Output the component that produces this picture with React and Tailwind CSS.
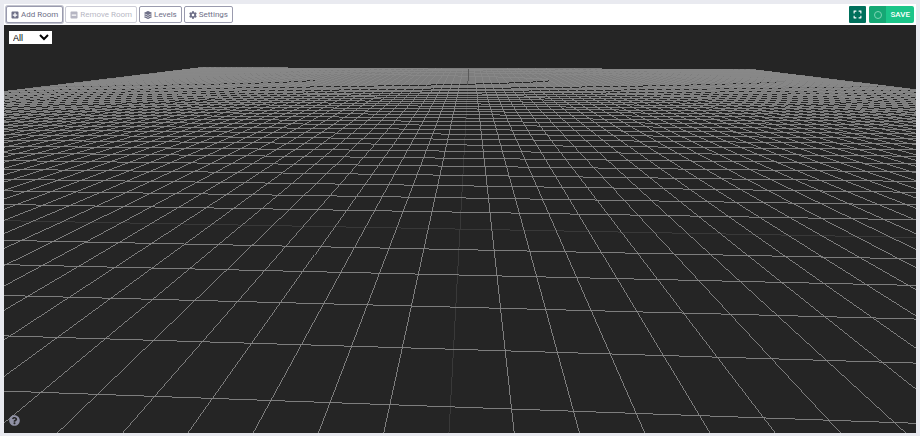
import React, { useState } from "react";
import {
  FaCog,
  FaExpand,
  FaLayerGroup,
  FaMinusSquare,
  FaPlusSquare,
  FaQuestionCircle,
} from "react-icons/fa";

const HALF = 50; // cells on each side of the origin
const WIDTH = 912;
const HEIGHT = 408;

// Ground plane -> view. The camera looks at the origin with a slight yaw.
const YAW = 0.0316;
const DEPTH = 0.0956;
const CELL = 31.8;
const HORIZON = 10;
const CAMERA_DROP = 194.1;
const NEAR = 0.35;

const depthAt = (i, j) => 1 + DEPTH * (j - YAW * i);

function project(i, j) {
  const w = depthAt(i, j);
  const x = WIDTH / 2 + (CELL * (i + YAW * j)) / w;
  const y = HORIZON + CAMERA_DROP / w;
  return `${x.toFixed(2)} ${y.toFixed(2)}`;
}

// Returns a path for the part of a segment in front of the near plane
function segment(a, b) {
  const wa = depthAt(a[0], a[1]);
  const wb = depthAt(b[0], b[1]);
  if (wa < NEAR && wb < NEAR) return "";
  let from = a;
  let to = b;
  if (wa < NEAR || wb < NEAR) {
    const t = (NEAR - wa) / (wb - wa);
    const cut = [a[0] + (b[0] - a[0]) * t, a[1] + (b[1] - a[1]) * t];
    if (wa < NEAR) from = cut;
    else to = cut;
  }
  return `M${project(from[0], from[1])}L${project(to[0], to[1])}`;
}

const gridLines = [];
for (let n = HALF; n >= -HALF; n--) {
  if (n === 0) continue;
  gridLines.push(segment([-HALF, n], [HALF, n]));
  gridLines.push(segment([n, -HALF], [n, HALF]));
}
const axisLines = [
  segment([-HALF, 0], [HALF, 0]),
  segment([0, -HALF], [0, HALF]),
];

function FloorGrid() {
  return (
    <svg
      className="block w-full h-auto"
      viewBox={`0 0 ${WIDTH} ${HEIGHT}`}
      fill="none"
      strokeWidth="0.9"
      shapeRendering="crispEdges"
      aria-hidden="true"
    >
      {axisLines.map((d, i) => (
        <path key={i} d={d} stroke="#3c3c3c" />
      ))}
      {gridLines.map((d, i) => (
        <path key={i} d={d} stroke="#888888" />
      ))}
      <path d={segment([0, 30], [0, HALF])} stroke="#555555" />
    </svg>
  );
}

function ToolButton({ icon: Icon, label, active, disabled }) {
  return (
    <button
      type="button"
      disabled={disabled}
      className={`flex h-[17px] items-center gap-[2px] rounded-[2px] border border-[#9a9bae] bg-white px-1 text-[8px] leading-none text-[#6f7088] disabled:opacity-50 ${
        active ? "ring-1 ring-[#c3c4cf]" : ""
      }`}
    >
      <Icon className="h-2 w-auto" />
      {label}
    </button>
  );
}

function App() {
  const [level, setLevel] = useState("All");

  return (
    <div className="min-h-screen bg-[#e9eaf0] p-1 pb-[3px] font-['Roboto',sans-serif] antialiased">
      <div className="flex h-[21px] items-center justify-between bg-white px-[2px]">
        <div className="flex gap-[2px]">
          <ToolButton icon={FaPlusSquare} label="Add Room" active />
          <ToolButton icon={FaMinusSquare} label="Remove Room" disabled />
          <ToolButton icon={FaLayerGroup} label="Levels" />
          <ToolButton icon={FaCog} label="Settings" />
        </div>
        <div className="flex gap-[3px]">
          <button
            type="button"
            aria-label="Fullscreen"
            className="flex size-[17px] items-center justify-center rounded-[1px] bg-[#00705c] text-white"
          >
            <FaExpand className="size-[9px]" />
          </button>
          <button
            type="button"
            className="flex h-[17px] items-stretch overflow-hidden rounded-[2px] bg-[#1bc589] text-[8px] font-medium leading-none text-white"
          >
            <span className="flex w-[17px] items-center justify-center bg-[#15a774]">
              <span className="size-2 rounded-full border border-[#7fd4b5]" />
            </span>
            <span className="flex items-center px-1">SAVE</span>
          </button>
        </div>
      </div>

      <div className="relative overflow-hidden bg-[#252525]">
        <FloorGrid />
        <select
          aria-label="Level"
          value={level}
          onChange={(e) => setLevel(e.target.value)}
          className="absolute left-[5px] top-[6px] h-[13px] w-[43px] border-0 bg-white p-0 font-['Liberation_Sans',sans-serif] text-[9px] leading-none text-black"
        >
          <option>All</option>
          <option>Level 1</option>
        </select>
        <button
          type="button"
          aria-label="Help"
          className="absolute bottom-[7px] left-[5px] text-[#9091a5]"
        >
          <FaQuestionCircle className="size-[11px]" />
        </button>
      </div>
    </div>
  );
}

export default App;
